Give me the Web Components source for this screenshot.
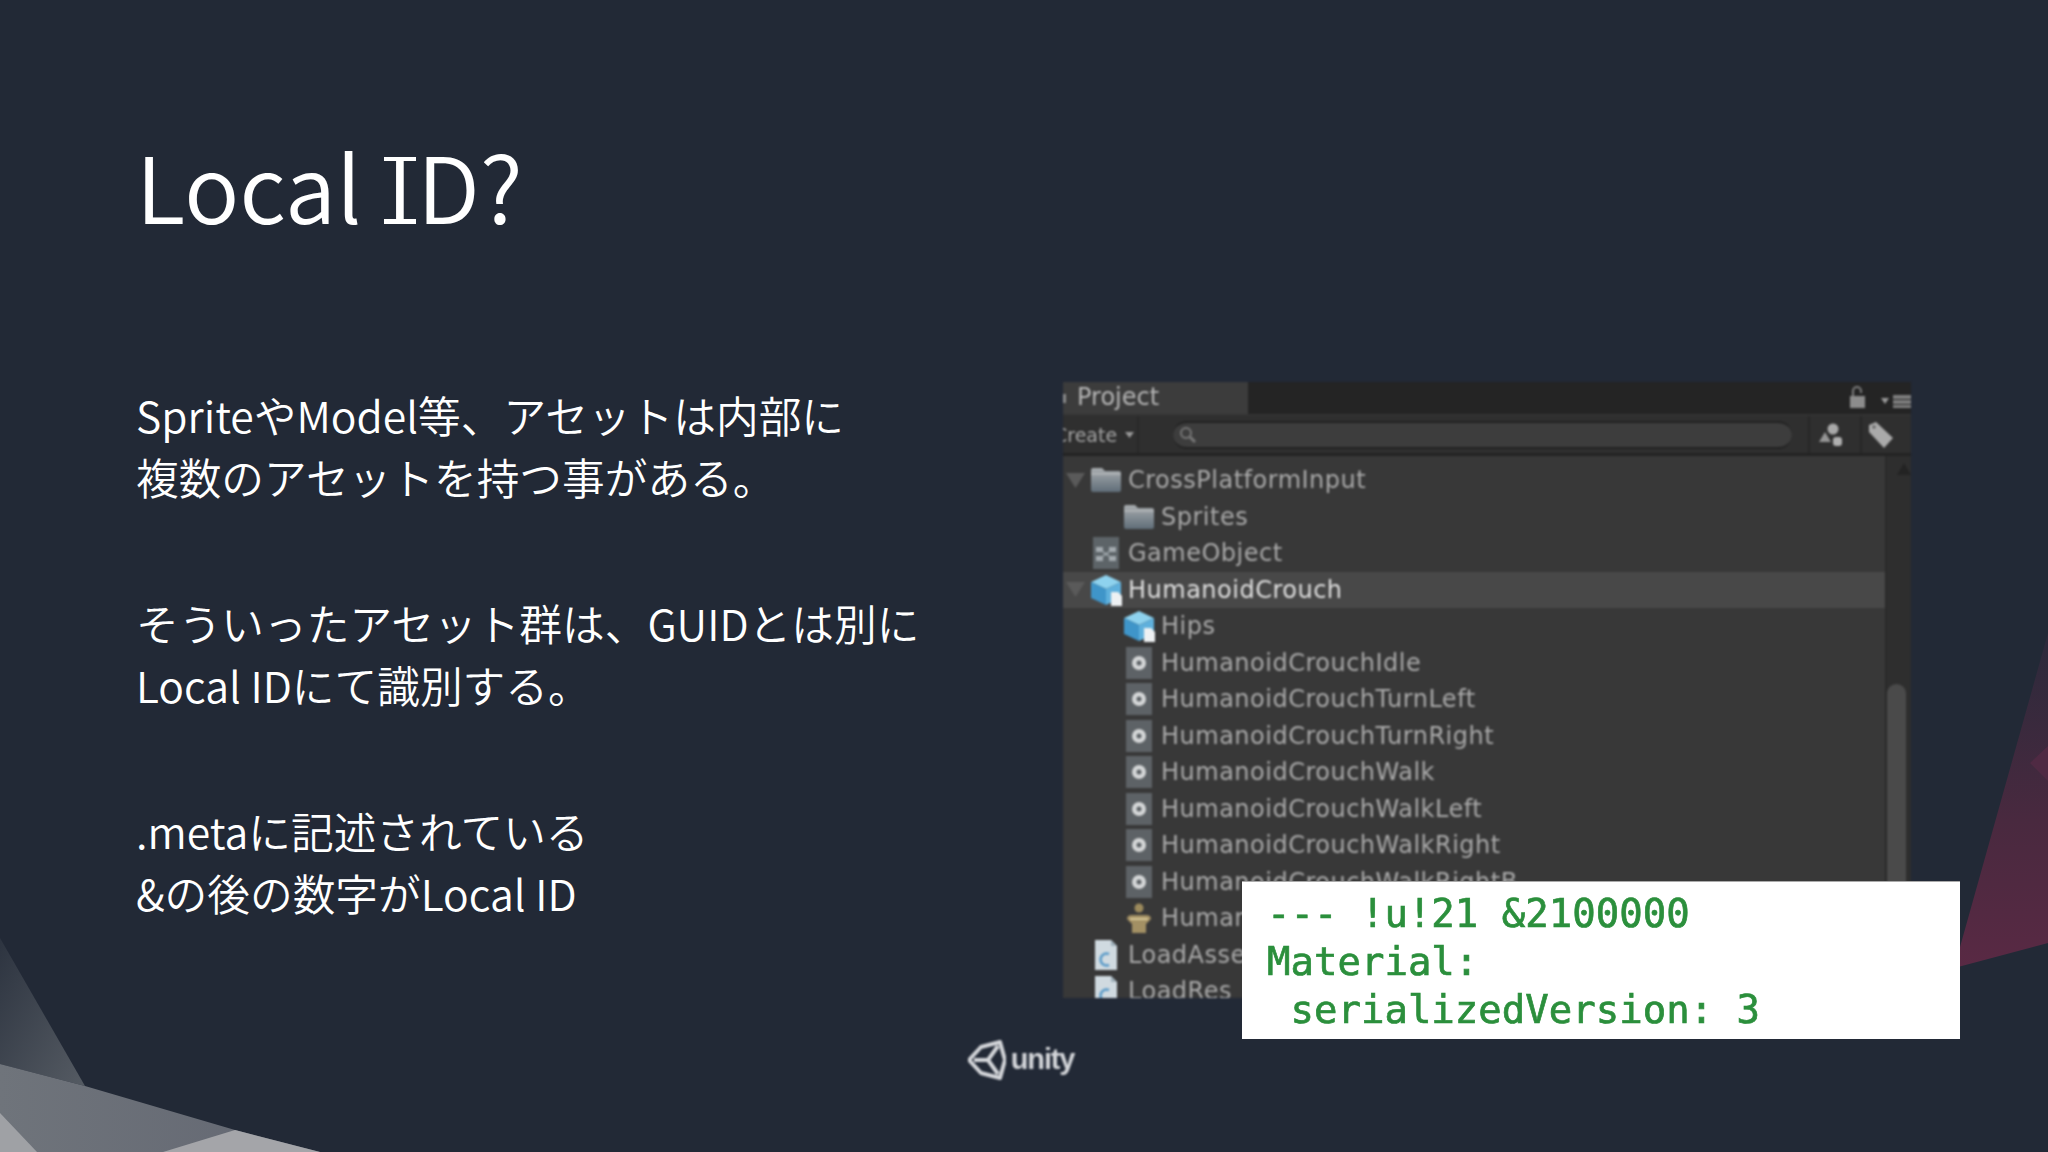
<!DOCTYPE html>
<html lang="ja"><head><meta charset="utf-8"><title>Local ID?</title>
<style>
html,body{margin:0;padding:0;background:#222936}
</style></head>
<body>
<unity-slide>
  <slide-title slot="title">Local <serif-cap>I</serif-cap>D?</slide-title>
  <text-para slot="body">SpriteやModel等、アセットは内部に<br>複数のアセットを持つ事がある。</text-para>
  <text-para slot="body">そういったアセット群は、GUIDとは別に<br>Local IDにて識別する。</text-para>
  <text-para slot="body">.metaに記述されている<br>&amp;の後の数字がLocal ID</text-para>
  <project-panel slot="figure">
    <tree-row arrow depth="0" icon="folder">CrossPlatformInput</tree-row>
    <tree-row depth="1" icon="folder">Sprites</tree-row>
    <tree-row depth="0" icon="prefab">GameObject</tree-row>
    <tree-row arrow selected depth="0" icon="cube">HumanoidCrouch</tree-row>
    <tree-row depth="1" icon="cube">Hips</tree-row>
    <tree-row depth="1" icon="clip">HumanoidCrouchIdle</tree-row>
    <tree-row depth="1" icon="clip">HumanoidCrouchTurnLeft</tree-row>
    <tree-row depth="1" icon="clip">HumanoidCrouchTurnRight</tree-row>
    <tree-row depth="1" icon="clip">HumanoidCrouchWalk</tree-row>
    <tree-row depth="1" icon="clip">HumanoidCrouchWalkLeft</tree-row>
    <tree-row depth="1" icon="clip">HumanoidCrouchWalkRight</tree-row>
    <tree-row depth="1" icon="clip">HumanoidCrouchWalkRightB</tree-row>
    <tree-row depth="1" icon="avatar">Human</tree-row>
    <tree-row depth="0" icon="script">LoadAsse</tree-row>
    <tree-row depth="0" icon="script">LoadRes</tree-row>
  </project-panel>
  <code-note slot="figure">--- !u!21 &amp;2100000
Material:
 serializedVersion: 3</code-note>
  <unity-logo slot="footer"></unity-logo>
</unity-slide>
<script>
function tpl(html){const t=document.createElement('template');t.innerHTML=html;return t;}
function def(name,t,extra){
  customElements.define(name,class extends HTMLElement{
    constructor(){super();this.attachShadow({mode:'open'}).appendChild(t.content.cloneNode(true));}
    connectedCallback(){if(extra)extra(this);}
  });
}
const JP='"Noto Sans CJK JP","Noto Sans",sans-serif';

def('unity-slide',tpl(`<style>
:host{display:block;position:relative;width:2048px;height:1152px;overflow:hidden;background:#222936;color:#fff;font-family:${JP}}
.bg{position:absolute;inset:0;width:2048px;height:1152px}
.page{position:relative;box-sizing:border-box;width:100%;height:100%;display:flex;flex-direction:column;padding:125px 0 0 136px}
.head{height:257px;flex:none}
.main{display:flex;flex:none;height:618px}
.text{width:927px;flex:none;display:flex;flex-direction:column;gap:83px;padding-top:1px}
.fig{position:relative;width:848px;flex:none}
.foot{display:flex;justify-content:center;margin-left:-136px;padding-top:40px}
</style>
<svg class="bg" viewBox="0 0 2048 1152" aria-hidden="true">
<defs>
<linearGradient id="mar" x1="0" y1="0" x2="0" y2="1"><stop offset="0" stop-color="#2b2a3b"/><stop offset=".55" stop-color="#49293f"/><stop offset="1" stop-color="#5a2944"/></linearGradient>
<linearGradient id="g1" x1="0" y1="0" x2="1" y2="1"><stop offset="0" stop-color="#2d3440"/><stop offset="1" stop-color="#555b63"/></linearGradient>
<linearGradient id="g2" x1="0" y1="0" x2="1" y2="0"><stop offset="0" stop-color="#6f747b"/><stop offset="1" stop-color="#636772"/></linearGradient>
</defs>
<path d="M2048 633 1960 947 1930 975 1958 967 2048 943Z" fill="url(#mar)"/>
<path d="M2048 746 2030 763 2048 781Z" fill="#4f2a43"/>
<path d="M0 938 85 1086 0 1064Z" fill="url(#g1)"/>
<path d="M0 1064 85 1086 235 1130 320 1152H0Z" fill="url(#g2)"/>
<path d="M0 1113 37 1152H0Z" fill="#9fa1a5"/>
<path d="M163 1152 235 1130 320 1152Z" fill="#a4a5a9"/>
</svg>
<div class="page">
  <div class="head"><slot name="title"></slot></div>
  <div class="main"><div class="text"><slot name="body"></slot></div><div class="fig"><slot name="figure"></slot></div></div>
  <div class="foot"><slot name="footer"></slot></div>
</div>`));

def('slide-title',tpl(`<style>:host{display:block;font-size:91.500px;font-weight:350;letter-spacing:.2px;line-height:118px;white-space:nowrap;color:#fff}</style><slot></slot>`));
def('serif-cap',tpl(`<style>
:host{display:inline-block;position:relative;padding:0 .045em;line-height:inherit}
b{position:absolute;left:.015em;right:.015em;height:.05em;background:currentColor}
.a{top:calc(50% - .297em)}
.z{top:calc(50% + .386em)}
</style><slot></slot><b class="a"></b><b class="z"></b>`));
def('text-para',tpl(`<style>:host{display:block;font-size:42.700px;font-weight:350;line-height:62.4px;white-space:nowrap;color:#fff}</style><slot></slot>`));

def('project-panel',tpl(`<style>
:host{display:block;width:848px;height:616px;overflow:hidden;background:#383838;font-family:"DejaVu Sans",sans-serif;filter:blur(.8px)}
.tabs{height:32px;background:#242424;display:flex;align-items:center;position:relative}
.tab{width:185px;height:100%;background:#3c3c3c;box-sizing:border-box;padding-left:14px;color:#b6b6b6;font-size:24px;line-height:30px;position:relative}
.tab i{position:absolute;left:0;top:12px;width:3px;height:9px;background:#8a8a8a}
.tabtools{margin-left:auto;display:flex;align-items:center}
.bar{height:42px;box-sizing:border-box;background:#2f2f2f;border-top:2px solid #333;border-bottom:3px solid #232323;display:flex;align-items:center;color:#a4a4a4;font-size:19px}
.create{width:76px;flex:none;height:100%;border-right:2px solid #282828;box-sizing:border-box;overflow:hidden;white-space:nowrap;line-height:34px;display:flex;align-items:center;gap:8px}
.create span{margin-left:-9px}
.search{margin-left:34px;width:619px;height:28px;flex:none;background:#3d3d3d;border:2px solid #222;border-width:2px 0 2px 0;border-radius:14px;display:flex;align-items:center;padding-left:5px;box-sizing:border-box}
.act{flex:none;display:flex;align-items:center;justify-content:center;height:100%;border-left:2px solid #272727}
.body{display:flex;height:542px}
.list{flex:1;padding-top:6px;min-width:0}
.scroll{width:26px;flex:none;background:#2e2e2e;position:relative;border-left:2px solid #2a2a2a;box-sizing:border-box}
.up{position:absolute;top:7px;left:10px;width:0;height:0;border:7px solid transparent;border-top:0;border-bottom:12px solid #232323}
.thumb{position:absolute;top:228px;left:0;right:5px;bottom:0;background:#4a4a4a;border-radius:10px 10px 0 0}
</style>
<div class="tabs"><div class="tab"><i></i>Project</div><div class="tabtools">
<svg width="61" height="28" viewBox="0 0 61 28"><path d="M0 12h15v12H0z" fill="#8c8c8c"/><path d="M3 12V7a4 4 0 0 1 8 0v2" fill="none" stroke="#7c7c7c" stroke-width="2"/><path d="M31 14h8l-4 6z" fill="#9a9a9a"/><path d="M43 11h18v4H43zM43 16h18v4H43zM43 21h18v3H43z" fill="#7e7e7e"/></svg>
</div></div>
<div class="bar"><div class="create"><span>Create</span> <svg width="9" height="6" viewBox="0 0 9 6"><path d="M0 0h9L4.500 6z" fill="#999"/></svg></div>
<div class="search"><svg width="20" height="20" viewBox="0 0 20 20"><circle cx="8" cy="8" r="5" fill="none" stroke="#777" stroke-width="2"/><path d="M12 12l5 5" stroke="#777" stroke-width="3"/></svg></div>
<div class="act" style="width:50px;margin-left:16px"><svg width="26" height="26" viewBox="0 0 26 26" style="margin-right:8px"><circle cx="15" cy="7" r="5.500" fill="#a8a8a8"/><path d="M1 20 7 10l6 10z" fill="#959595"/><rect x="15" y="15" width="9" height="9" rx="3" fill="#b0b0b0"/></svg></div>
<div class="act" style="width:48px"><svg width="26" height="28" viewBox="0 0 26 28" style="margin-right:10px"><path d="M1 4 8 1 25 17 16 27 1 11Z" fill="#aaa"/><circle cx="6" cy="6" r="1.800" fill="#666"/></svg></div></div>
<div class="body"><div class="list"><slot></slot></div><div class="scroll"><div class="up"></div><div class="thumb"></div></div></div>`));

const ICONS={
folder:`<svg width="32" height="28" viewBox="0 0 32 28"><defs><linearGradient id="f" x1="0" y1="0" x2="0" y2="1"><stop offset="0" stop-color="#a9adb0"/><stop offset="1" stop-color="#5f6d78"/></linearGradient></defs><path d="M1 4q0-2 2-2h9l3 3h14q2 0 2 2v17q0 2-2 2H3q-2 0-2-2Z" fill="url(#f)"/><path d="M1 8h30" stroke="#c8c8c8" stroke-width="1.500" opacity=".6"/></svg>`,
prefab:`<svg width="26" height="32" viewBox="0 0 26 32"><rect width="26" height="32" fill="#5d6468"/><path d="M3 10h7v5H3zM16 10h7v5h-7zM3 19h7v5H3zM16 19h7v5h-7z" fill="#b5bcc0" opacity=".8"/><path d="M10 15l6 4M16 15l-6 4" stroke="#aab2b6" stroke-width="1.500"/></svg>`,
cube:`<svg width="33" height="32" viewBox="0 0 33 32"><path d="M1 8 16 1l15 7-15 7Z" fill="#8ed2ee"/><path d="M1 8l15 7v16L1 24Z" fill="#3f95c9"/><path d="M16 15 31 8v16l-15 7Z" fill="#5fb0dc"/><path d="M21 18h7l4 4v10H21Z" fill="#eef1f3"/></svg>`,
clip:`<svg width="26" height="32" viewBox="0 0 26 32"><rect width="26" height="32" fill="#5d6266"/><circle cx="13" cy="16" r="7" fill="#d4d6d7"/><circle cx="13" cy="16" r="2.500" fill="#5d6266"/></svg>`,
avatar:`<svg width="26" height="32" viewBox="0 0 26 32"><circle cx="13" cy="6" r="4.500" fill="#9c8a5c"/><path d="M1 17q0-4 5-4h14q5 0 5 4l-5 5v9H6v-9Z" fill="#a39064"/><path d="M4 17h18" stroke="#d8c898" stroke-width="2"/></svg>`,
script:`<svg width="24" height="32" viewBox="0 0 24 32"><path d="M1 1h16l6 6v24H1Z" fill="#d0dae0"/><path d="M17 1v6h6" fill="#9fb0ba"/><path d="M15 15a6 6 0 1 0 0 11" fill="none" stroke="#5b9bc8" stroke-width="2.500"/></svg>`};

customElements.define('tree-row',class extends HTMLElement{
  constructor(){super();this.attachShadow({mode:'open'});}
  connectedCallback(){
    const d=+this.getAttribute('depth')||0, ic=this.getAttribute('icon');
    const a=this.hasAttribute('arrow'), sel=this.hasAttribute('selected');
    this.shadowRoot.innerHTML=`<style>
:host{display:flex;align-items:center;height:36.5px;background:${sel?'#484848':'transparent'};color:${sel?'#e0e0e0':'#a9a9a9'};font-size:24px;letter-spacing:.5px;white-space:nowrap}
.ar{width:${a?19:0}px;height:15px;margin-left:${a?3:0}px;flex:none}
.ic{flex:none;display:flex;justify-content:center;width:34px;margin-left:${(a?4:26)+(d?33:0)}px;margin-right:5px}
</style>${a?`<svg class="ar" viewBox="0 0 19 15"><path d="M0 0h19L9.500 15z" fill="#5a5a5a"/></svg>`:''}<span class="ic">${ICONS[ic]||''}</span><slot></slot>`;
  }
});

def('code-note',tpl(`<style>
:host{display:block;position:absolute;left:179px;top:499px;width:718px;height:158px;box-sizing:border-box;background:#fff;padding:8px 0 0 25px;color:#2b8f3c;font:39px/48px "DejaVu Sans Mono",monospace;-webkit-text-stroke:.7px #2b8f3c;white-space:pre;overflow:hidden;border-top:1px solid #aaa}
.t{filter:blur(.7px)}
</style><div class="t"><slot></slot></div>`));

def('unity-logo',tpl(`<style>
:host{display:flex;align-items:center;gap:5px;height:40px;margin-left:-6px;filter:blur(.9px);color:#d4d6da}
span{font:700 29px/40px "Liberation Sans",sans-serif;letter-spacing:-1.2px;margin-top:-3px}
</style>
<svg width="38" height="40" viewBox="0 0 38 40"><path d="M1 20 13 7 32 2 37 20 32 38 13 33Z" fill="none" stroke="#d4d6da" stroke-width="4" stroke-linejoin="round"/><path d="M6 20H20L30 6M20 20 30 34" fill="none" stroke="#d4d6da" stroke-width="4"/></svg><span>unity</span>`));
</script>
</body></html>
